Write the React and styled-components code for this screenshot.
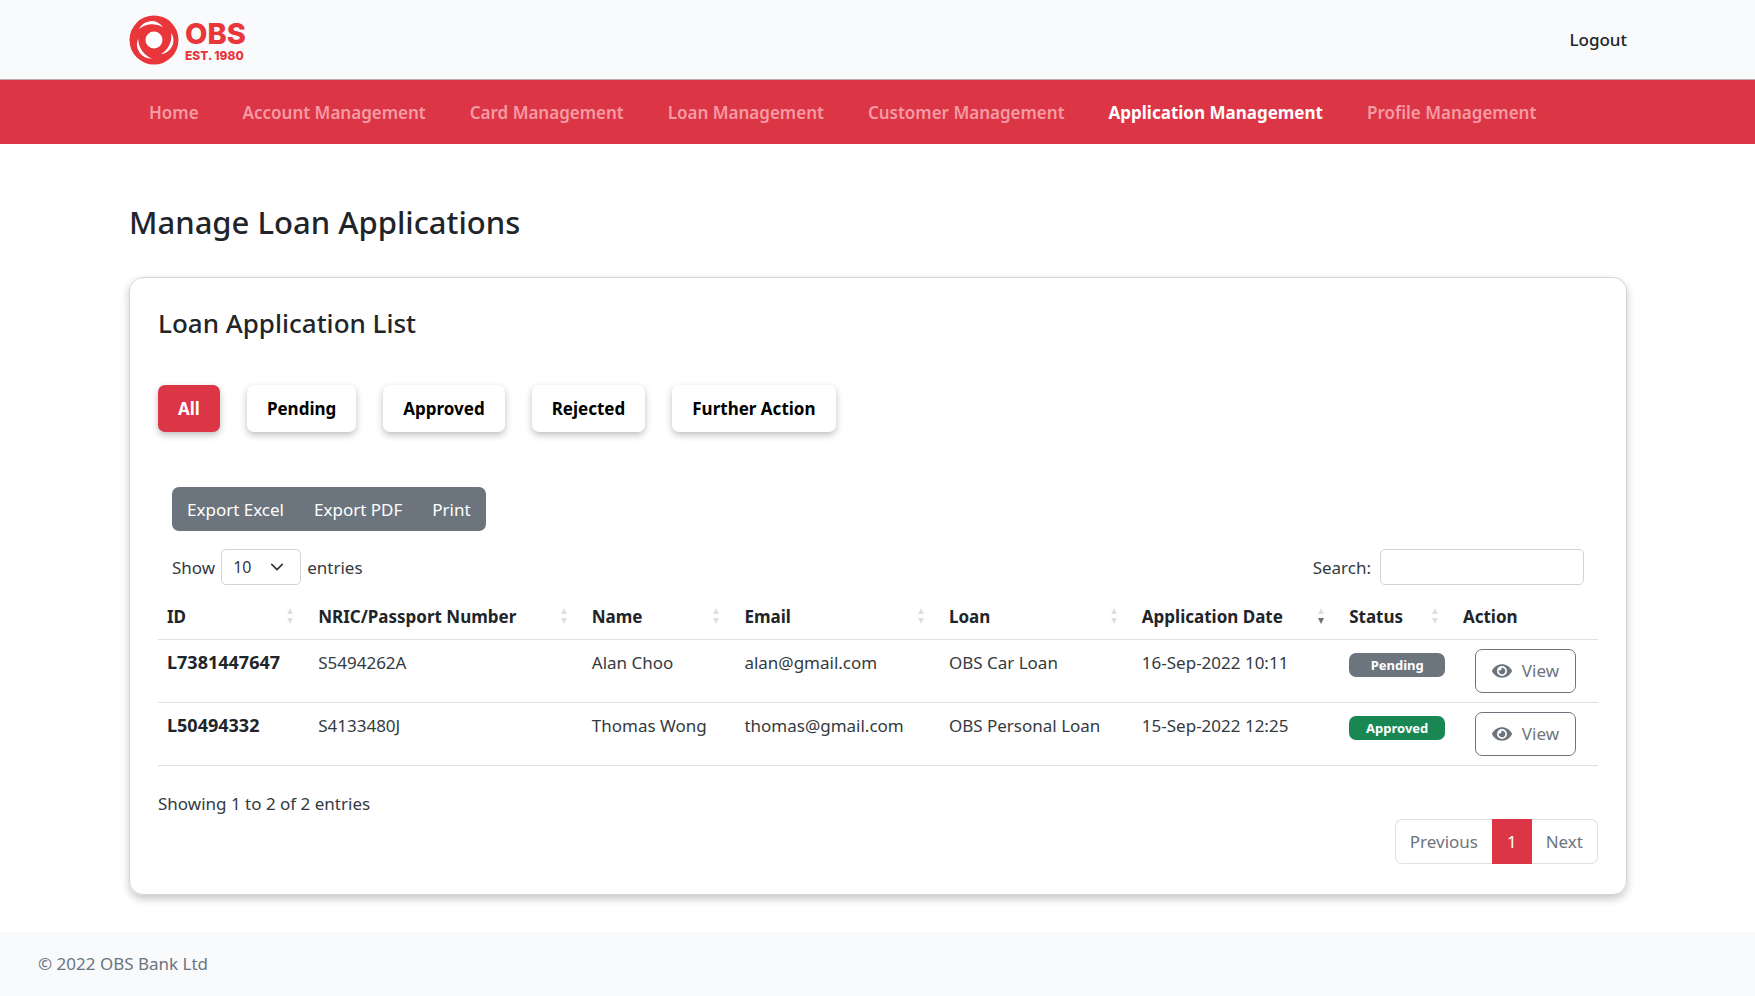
import React from "react";
import styled, { createGlobalStyle } from "styled-components";
import { FaEye } from "react-icons/fa";

const red = "#dc3545";
const grey = "#6c757d";
const line = "#dee2e6";

const GlobalStyle = createGlobalStyle`
  *, *::before, *::after { box-sizing: border-box; }
  body {
    margin: 0;
    background: #fff;
    color: #212529;
    font-family: "Segoe UI", "Noto Sans", "Open Sans", sans-serif;
    font-size: 17px;
    line-height: 27px;
  }
  button, input, select { font: inherit; }
`;

const Page = styled.div`
  min-height: 100vh;
  display: flex;
  flex-direction: column;
`;

const TopBar = styled.header`
  display: flex;
  align-items: center;
  justify-content: space-between;
  height: 80px;
  padding: 0 128px 0 129px;
  background: #f8fafc;
  border-bottom: 1px solid #c3a9af;
`;

const Brand = styled.a`
  display: flex;
  align-items: center;
  gap: 6px;
  color: #e8363b;
  text-decoration: none;
`;

const BrandText = styled.span`
  display: flex;
  flex-direction: column;
  padding-top: 2px;
  font-family: Inter, sans-serif;
  font-weight: 800;
`;

const BrandName = styled.span`
  font-size: 29px;
  line-height: 30px;
`;

const BrandSince = styled.span`
  font-size: 12px;
  line-height: 14px;
`;

const LogoutLink = styled.a`
  color: #212529;
  font-weight: 500;
  text-decoration: none;
`;

const NavBar = styled.nav`
  display: flex;
  align-items: center;
  gap: 44px;
  height: 64px;
  padding: 0 149px;
  background: ${red};
`;

const NavLink = styled.a`
  color: ${(p) => (p.$active ? "#fff" : "#f69ba4")};
  font-weight: ${(p) => (p.$active ? 700 : 600)};
  text-decoration: none;
  white-space: nowrap;
`;

const Main = styled.main`
  flex: 1;
  padding: 59px 128px 37px 129px;
`;

const PageTitle = styled.h1`
  margin: 0 0 36px;
  font-size: 31px;
  line-height: 38px;
  font-weight: 500;
`;

const Card = styled.section`
  padding: 27px 28px 28px;
  border: 1px solid #d3d4d6;
  border-radius: 14px;
  box-shadow: 0 4px 8px rgba(0, 0, 0, 0.22);
`;

const CardTitle = styled.h2`
  margin: 0;
  font-size: 26px;
  line-height: 36px;
  font-weight: 500;
`;

const Tabs = styled.div`
  display: flex;
  gap: 27px;
  margin-top: 44px;
`;

const Tab = styled.button`
  height: 47px;
  padding: 0 20px;
  border: 0;
  border-radius: 7px;
  background: ${(p) => (p.$active ? red : "#fff")};
  color: ${(p) => (p.$active ? "#fff" : "#000")};
  font-weight: 700;
  box-shadow: 0 3px 7px rgba(0, 0, 0, 0.25);
`;

const Tools = styled.div`
  padding: 55px 14px 0;
`;

const ExportGroup = styled.div`
  display: inline-flex;
  border-radius: 7px;
  overflow: hidden;
`;

const ExportButton = styled.button`
  height: 44px;
  padding: 0 15px;
  border: 0;
  background: ${grey};
  color: #fff;
`;

const Filters = styled.div`
  display: flex;
  justify-content: space-between;
  margin-top: 18px;
`;

const FieldLabel = styled.label`
  display: flex;
  align-items: center;
  gap: ${(p) => p.$gap}px;
  color: #343a40;
`;

const SelectWrap = styled.span`
  position: relative;
  display: flex;
`;

const LengthSelect = styled.select`
  width: 80px;
  height: 36px;
  padding: 0 11px;
  appearance: none;
  border: 1px solid #ced4da;
  border-radius: 5px;
  background: #fff;
  color: #343a40;
  font-size: 16px;
`;

const Chevron = styled.svg`
  position: absolute;
  right: 17px;
  top: 11px;
  pointer-events: none;
`;

const SearchInput = styled.input`
  width: 204px;
  height: 36px;
  padding: 0 9px;
  border: 1px solid #ced4da;
  border-radius: 5px;
`;

const Table = styled.table`
  width: 100%;
  margin-top: 9px;
  table-layout: fixed;
  border-collapse: collapse;
`;

const HeadCell = styled.th`
  width: ${(p) => p.$width};
  height: 45px;
  padding: 0 9px;
  border-bottom: 1px solid ${line};
  text-align: left;
  font-weight: 700;
`;

const HeadInner = styled.span`
  display: flex;
  align-items: center;
  justify-content: space-between;
  padding-right: 7px;
  white-space: nowrap;
`;

const Cell = styled.td`
  height: 63px;
  padding: 9px;
  border-bottom: 1px solid ${line};
  vertical-align: top;
  color: #343a40;
  white-space: nowrap;
`;

const IdCell = styled(Cell).attrs({ as: "th", scope: "row" })`
  color: #212529;
  font-size: 18px;
  font-weight: 700;
  text-align: left;
`;

const Badge = styled.span`
  display: block;
  width: 96px;
  margin-top: 4px;
  border-radius: 7px;
  background: ${(p) => (p.$approved ? "#198754" : grey)};
  color: #fff;
  font-size: 13px;
  line-height: 24px;
  font-weight: 700;
  text-align: center;
`;

const ViewButton = styled.button`
  display: flex;
  align-items: center;
  justify-content: center;
  gap: 10px;
  width: 101px;
  height: 44px;
  margin-left: 12px;
  border: 1px solid ${grey};
  border-radius: 7px;
  background: #fff;
  color: ${grey};
`;

const Info = styled.p`
  margin: 24px 0 0;
  color: #343a40;
`;

const Pagination = styled.div`
  display: flex;
  justify-content: flex-end;
  margin: 2px 0;
`;

const PageButton = styled.button`
  height: 45px;
  padding: 0 14px;
  border: 1px solid ${(p) => (p.$active ? red : line)};
  border-left-width: ${(p) => (p.$edge === "right" ? 0 : 1)}px;
  border-right-width: ${(p) => (p.$edge === "left" ? 0 : 1)}px;
  border-radius: ${(p) =>
    p.$edge === "left" ? "7px 0 0 7px" : p.$edge === "right" ? "0 7px 7px 0" : "0"};
  background: ${(p) => (p.$active ? red : "#fff")};
  color: ${(p) => (p.$active ? "#fff" : grey)};
`;

const Footer = styled.footer`
  height: 64px;
  padding: 18px 38px;
  background: #f8fafc;
  color: ${grey};
`;

const crescent = "M-15 -11 A14 14 0 0 1 9 -13 A21 21 0 0 0 -15 -11 Z";

function Logo() {
  return (
    <svg width="50" height="50" viewBox="-25 -25 50 50" aria-hidden="true">
      <circle r="24.5" fill="#e8363b" />
      <circle r="8.5" fill="#fff" />
      {[0, 120, 240].map((a) => (
        <path key={a} d={crescent} fill="#fff" transform={`rotate(${a})`} />
      ))}
    </svg>
  );
}

function SortMark({ desc }) {
  return (
    <svg width="6" height="16" viewBox="0 0 6 16" aria-hidden="true">
      <path d="M3 0 L6 6 H0 Z" fill="#dedfe0" />
      <path d="M3 16 L6 10 H0 Z" fill={desc ? "#6f7275" : "#dedfe0"} />
    </svg>
  );
}

const navItems = [
  "Home",
  "Account Management",
  "Card Management",
  "Loan Management",
  "Customer Management",
  "Application Management",
  "Profile Management",
];
const tabs = ["All", "Pending", "Approved", "Rejected", "Further Action"];
const columns = [
  ["ID", "10.5%"],
  ["NRIC/Passport Number", "19%"],
  ["Name", "10.6%"],
  ["Email", "14.2%"],
  ["Loan", "13.4%"],
  ["Application Date", "14.4%"],
  ["Status", "7.9%"],
  ["Action", "10%"],
];
const rows = [
  ["L7381447647", "S5494262A", "Alan Choo", "alan@gmail.com", "OBS Car Loan", "16-Sep-2022 10:11", "Pending"],
  ["L50494332", "S4133480J", "Thomas Wong", "thomas@gmail.com", "OBS Personal Loan", "15-Sep-2022 12:25", "Approved"],
];

export default function App() {
  return (
    <Page>
      <GlobalStyle />
      <TopBar>
        <Brand href="#">
          <Logo />
          <BrandText>
            <BrandName>OBS</BrandName>
            <BrandSince>EST. 1980</BrandSince>
          </BrandText>
        </Brand>
        <LogoutLink href="#">Logout</LogoutLink>
      </TopBar>
      <NavBar>
        {navItems.map((item) => (
          <NavLink key={item} href="#" $active={item === "Application Management"}>
            {item}
          </NavLink>
        ))}
      </NavBar>
      <Main>
        <PageTitle>Manage Loan Applications</PageTitle>
        <Card>
          <CardTitle>Loan Application List</CardTitle>
          <Tabs>
            {tabs.map((t) => (
              <Tab key={t} type="button" $active={t === "All"}>
                {t}
              </Tab>
            ))}
          </Tabs>
          <Tools>
            <ExportGroup>
              <ExportButton type="button">Export Excel</ExportButton>
              <ExportButton type="button">Export PDF</ExportButton>
              <ExportButton type="button">Print</ExportButton>
            </ExportGroup>
            <Filters>
              <FieldLabel htmlFor="length" $gap={6}>
                Show
                <SelectWrap>
                  <LengthSelect id="length" defaultValue="10">
                    <option>10</option>
                    <option>25</option>
                    <option>50</option>
                    <option>100</option>
                  </LengthSelect>
                  <Chevron width="14" height="14" viewBox="0 0 16 16" aria-hidden="true">
                    <path d="M2 5l6 6 6-6" fill="none" stroke="#343a40" strokeWidth="2" strokeLinecap="round" strokeLinejoin="round" />
                  </Chevron>
                </SelectWrap>
                entries
              </FieldLabel>
              <FieldLabel htmlFor="search" $gap={9}>
                Search:
                <SearchInput id="search" type="search" />
              </FieldLabel>
            </Filters>
          </Tools>
          <Table>
            <thead>
              <tr>
                {columns.map(([name, width]) => (
                  <HeadCell key={name} scope="col" $width={width}>
                    <HeadInner>
                      {name}
                      {name !== "Action" && <SortMark desc={name === "Application Date"} />}
                    </HeadInner>
                  </HeadCell>
                ))}
              </tr>
            </thead>
            <tbody>
              {rows.map(([id, nric, name, email, loan, date, status]) => (
                <tr key={id}>
                  <IdCell>{id}</IdCell>
                  <Cell>{nric}</Cell>
                  <Cell>{name}</Cell>
                  <Cell>{email}</Cell>
                  <Cell>{loan}</Cell>
                  <Cell>{date}</Cell>
                  <Cell>
                    <Badge $approved={status === "Approved"}>{status}</Badge>
                  </Cell>
                  <Cell>
                    <ViewButton type="button">
                      <FaEye size={20} />
                      View
                    </ViewButton>
                  </Cell>
                </tr>
              ))}
            </tbody>
          </Table>
          <Info>Showing 1 to 2 of 2 entries</Info>
          <Pagination>
            <PageButton type="button" $edge="left">Previous</PageButton>
            <PageButton type="button" $active>1</PageButton>
            <PageButton type="button" $edge="right">Next</PageButton>
          </Pagination>
        </Card>
      </Main>
      <Footer>© 2022 OBS Bank Ltd</Footer>
    </Page>
  );
}
